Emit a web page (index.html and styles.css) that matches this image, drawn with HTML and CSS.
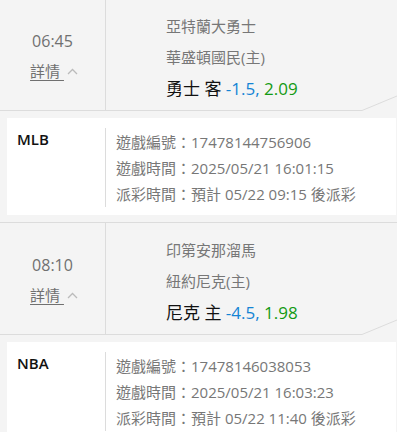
FILE: index.html
```html
<!DOCTYPE html>
<html>
<head>
   <meta charset="utf-8" />
   <title>注單列表</title>
   <link rel="stylesheet" href="styles.css">
</head>
<body>
   <div class="bet-list">
       <div class="match first">
           <div class="match-time">
               <div class="time">06:45</div>
               <div class="detail">
                   <a class="detail-link">詳情&nbsp;</a>
                   <svg class="caret" width="11" height="7" viewBox="0 0 11 7"><polyline points="1,6 5.5,1.5 10,6" fill="none" stroke="#bbb" stroke-width="1.3" /></svg>
               </div>
           </div>
           <div class="match-teams">
               <div class="team">亞特蘭大勇士</div>
               <div class="team">華盛頓國民(主)</div>
               <div class="pick">勇士 客 <span class="line">-1.5,</span> <span class="odds">2.09</span></div>
           </div>
           <svg class="fold" width="35" height="16" viewBox="0 0 35 16">
               <rect x="0" y="14" width="35" height="2" fill="#f4f4f4" />
               <line x1="0" y1="15.5" x2="35" y2="1" stroke="#dcdcdc" stroke-width="1" />
           </svg>
       </div>
       <div class="ticket">
           <div class="league">MLB</div>
           <div class="info">
               <div>遊戲編號：17478144756906</div>
               <div>遊戲時間：2025/05/21 16:01:15</div>
               <div>派彩時間：預計 05/22 09:15 後派彩</div>
           </div>
       </div>

       <div class="match">
           <div class="match-time">
               <div class="time">08:10</div>
               <div class="detail">
                   <a class="detail-link">詳情&nbsp;</a>
                   <svg class="caret" width="11" height="7" viewBox="0 0 11 7"><polyline points="1,6 5.5,1.5 10,6" fill="none" stroke="#bbb" stroke-width="1.3" /></svg>
               </div>
           </div>
           <div class="match-teams">
               <div class="team">印第安那溜馬</div>
               <div class="team">紐約尼克(主)</div>
               <div class="pick">尼克 主 <span class="line">-4.5,</span> <span class="odds">1.98</span></div>
           </div>
           <svg class="fold" width="35" height="16" viewBox="0 0 35 16">
               <rect x="0" y="14" width="35" height="2" fill="#f4f4f4" />
               <line x1="0" y1="15.5" x2="35" y2="1" stroke="#dcdcdc" stroke-width="1" />
           </svg>
       </div>
       <div class="ticket">
           <div class="league">NBA</div>
           <div class="info">
               <div>遊戲編號：17478146038053</div>
               <div>遊戲時間：2025/05/21 16:03:23</div>
               <div>派彩時間：預計 05/22 11:40 後派彩</div>
           </div>
       </div>
   </div>
</body>
</html>
```

FILE: styles.css
```css
body, html {
    margin: 0;
    background-color: #f4f4f4;
    font-family: "Open Sans", "Noto Sans CJK TC", sans-serif;
    color: #777;
}
.bet-list {
    display: flex;
    flex-direction: column;
}
/* match header: time on the left, teams on the right */
.match {
    position: relative;
    display: grid;
    grid-template-columns: 106px 1fr;
    height: 111px;
    border-top: 1px solid #dcdcdc;
    border-bottom: 1px solid #dcdcdc;
    background-color: #f4f4f4;
}
.match.first {
    margin-top: -2px;
}
.match-time {
    border-right: 1px solid #dcdcdc;
    text-align: center;
    padding-top: 31px;
}
.time {
    font-size: 16px;
    line-height: 22px;
    color: #707070;
}
.detail {
    display: flex;
    justify-content: center;
    align-items: center;
    gap: 3px;
    margin-top: 8px;
    font-size: 15px;
    line-height: 22px;
    padding-left: 3px;
}
.detail-link {
    color: #707070;
    text-decoration: underline;
    text-underline-offset: 3px;
}
.caret {
    display: block;
}
.match-teams {
    padding: 12px 0 0 60px;
    line-height: 31px;
}
.team {
    font-size: 15px;
    color: #777;
}
.pick {
    font-size: 17px;
    color: #111;
}
.pick .line {
    color: #1484d4;
}
.pick .odds {
    color: #139a13;
}
.fold {
    position: absolute;
    right: 0;
    bottom: -1px;
    display: block;
}
/* ticket card */
.ticket {
    display: grid;
    grid-template-columns: 98px 1fr;
    margin: 7px 1px 7px 7px;
    padding: 10px 0 8px;
    background-color: #fff;
}
.league {
    padding-left: 10px;
    font-size: 15px;
    font-weight: 600;
    line-height: 22px;
    color: #111;
}
.info {
    border-left: 1px solid #dcdcdc;
    padding: 1px 0 0 10px;
    font-size: 15px;
    line-height: 26px;
    color: #777;
}
```
